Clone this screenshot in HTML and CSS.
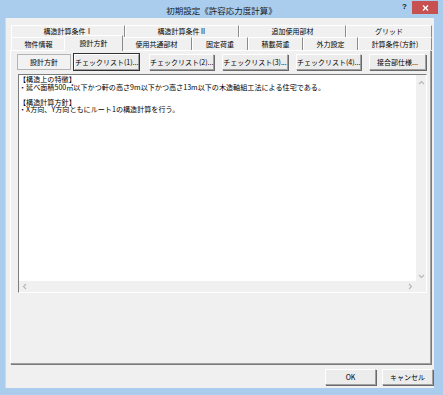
FILE: index.html
```html
<!DOCTYPE html>
<html lang="ja">
<head>
<meta charset="utf-8">
<link rel="stylesheet" href="styles.css">
</head>
<body>
<div class="window">
  <div class="titlebar">
    <div></div>
    <div class="title">初期設定《許容応力度計算》</div>
    <div class="controls">
      <span class="help">?</span>
      <span class="close"><svg width="7" height="6" viewBox="0 0 7 6"><path d="M1 0.5 L6 5.5 M6 0.5 L1 5.5" stroke="#fff" stroke-width="1.4"/></svg></span>
    </div>
  </div>
  <div class="client">
    <div class="tabrow row1">
      <div class="tab">構造計算条件Ⅰ</div>
      <div class="tab">構造計算条件Ⅱ</div>
      <div class="tab">追加使用部材</div>
      <div class="tab">グリッド</div>
    </div>
    <div class="tabrow row2">
      <div class="tab">物件情報</div>
      <div class="tab sel">設計方針</div>
      <div class="tab">使用共通部材</div>
      <div class="tab">固定荷重</div>
      <div class="tab">積載荷重</div>
      <div class="tab">外力設定</div>
      <div class="tab">計算条件(方針)</div>
    </div>
    <div class="panel">
      <div class="btnrow">
        <div class="btn pressed w54 gap3">設計方針</div>
        <div class="btn focus w65 gap10">チェックリスト(1)...</div>
        <div class="btn w65">チェックリスト(2)...</div>
        <div class="btn w66">チェックリスト(3)...</div>
        <div class="btn w65">チェックリスト(4)...</div>
        <div class="btn w57">接合部仕様...</div>
      </div>
      <div class="memo">
        <div class="memo-text">【構造上の特徴】
・延べ面積500㎡以下かつ軒の高さ9m以下かつ高さ13m以下の木造軸組工法による住宅である。

【構造計算方針】
・X方向、Y方向ともにルート1の構造計算を行う。</div>
        <div class="vscroll">
          <svg width="7" height="5" viewBox="0 0 7 5"><path d="M1 4 L3.5 1.5 L6 4" fill="none" stroke="#b8b8b8" stroke-width="1.2"/></svg>
          <svg width="7" height="5" viewBox="0 0 7 5"><path d="M1 1 L3.5 3.5 L6 1" fill="none" stroke="#b8b8b8" stroke-width="1.2"/></svg>
        </div>
        <div class="hscroll">
          <svg width="5" height="7" viewBox="0 0 5 7"><path d="M4 1 L1.5 3.5 L4 6" fill="none" stroke="#b8b8b8" stroke-width="1.2"/></svg>
          <svg width="5" height="7" viewBox="0 0 5 7"><path d="M1 1 L3.5 3.5 L1 6" fill="none" stroke="#b8b8b8" stroke-width="1.2"/></svg>
        </div>
        <div class="corner"></div>
      </div>
    </div>
    <div class="footer">
      <div class="btn w51">OK</div>
      <div class="btn w51">キャンセル</div>
    </div>
  </div>
</div>
</body>
</html>
```
FILE: styles.css
```css
* { box-sizing: border-box; }
html, body { margin: 0; padding: 0; }
body {
  width: 443px;
  height: 395px;
  overflow: hidden;
  background: #aacdee;
  font-family: "Noto Sans CJK JP", "Noto Sans", sans-serif;
  color: #000;
}
.window {
  height: 395px;
  display: flex;
  flex-direction: column;
}
.titlebar {
  height: 18px;
  flex: none;
  display: grid;
  grid-template-columns: 1fr auto 1fr;
  align-items: start;
}
.title {
  font-size: 8.5px;
  line-height: 9px;
  margin-top: 6px;
  white-space: nowrap;
  color: #1a1a1a;
}
.controls {
  justify-self: end;
  display: flex;
  align-items: flex-start;
  margin-right: 5px;
}
.help {
  font-family: "Liberation Sans", sans-serif;
  font-weight: bold;
  font-size: 8px;
  line-height: 8px;
  margin-top: 3px;
  margin-right: 5px;
  color: #222;
}
.close {
  width: 26px;
  height: 13px;
  margin-top: 1px;
  background: #c75050;
  display: flex;
  align-items: center;
  justify-content: center;
}
.client {
  flex: 1;
  margin: 0 9px 7px 5px;
  background: #f0f0f0;
  padding: 7px 2px 0 4px;
  display: flex;
  flex-direction: column;
  border-left: 1px solid #c9dcef;
}
.tabrow {
  display: grid;
  margin-left: 1px;
  margin-right: 0;
}
.row1 {
  height: 12px;
  grid-template-columns: 114px 114px 107px 1fr;
}
.row2 {
  height: 13px;
  grid-template-columns: 55px 55px 71px 56px 55px 55px 1fr;
}
.tab {
  font-size: 7px;
  line-height: 11px;
  text-align: center;
  white-space: nowrap;
  border-top: 1px solid #fff;
  border-left: 1px solid #fff;
  border-right: 1px solid #8c8c8c;
}
.row2 .tab {
  line-height: 12px;
}
.tab.sel {
  position: relative;
  z-index: 1;
  margin: -2px -2px -1px;
  padding-top: 1px;
  background: #f0f0f0;
}
.panel {
  flex: 1;
  margin-right: 1px;
  border-top: 1px solid #fff;
  border-left: 1px solid #fff;
  border-right: 1px solid #a0a0a0;
  border-bottom: 1px solid #a0a0a0;
  box-shadow: 1px 1px 0 #7a7a7a;
  padding: 3px 0 0 6px;
  display: flex;
  flex-direction: column;
}
.btnrow {
  display: flex;
  height: 16px;
  gap: 8px;
}
.btn {
  height: 16px;
  font-size: 7px;
  line-height: 14px;
  text-align: center;
  white-space: nowrap;
  background: #ececec;
  border-top: 1px solid #fff;
  border-left: 1px solid #fff;
  border-right: 1px solid #a0a0a0;
  border-bottom: 1px solid #a0a0a0;
  box-shadow: 1px 1px 0 #6a6a6a;
}
.btn.focus {
  outline: 1px solid #333;
}
.btn.pressed {
  background: #f2f2f2;
  border: 1px solid #b4b4b4;
  box-shadow: none;
}
.w51 { width: 51px; }
.w54 { width: 54px; }
.w57 { width: 57px; }
.w65 { width: 65px; }
.w66 { width: 66px; }
.gap3 { margin-right: -5px; }
.gap10 { margin-right: 2px; }
.memo {
  margin: 4px 0 0 1px;
  width: 409px;
  height: 219px;
  background: #fff;
  border-top: 1px solid #7c7c7c;
  border-left: 1px solid #7c7c7c;
  border-right: 1px solid #fff;
  border-bottom: 1px solid #fff;
  display: grid;
  grid-template-columns: 1fr 10px;
  grid-template-rows: 1fr 11px;
}
.memo-text {
  font-size: 7.1px;
  line-height: 7.5px;
  white-space: pre;
  overflow: visible;
  padding: 1px 0 0 0;
}
.vscroll {
  background: #f0f0f0;
  display: flex;
  flex-direction: column;
  justify-content: space-between;
  align-items: center;
  padding: 5px 0 2px;
}
.hscroll {
  background: #f0f0f0;
  display: flex;
  justify-content: space-between;
  align-items: center;
  padding: 0 3px 0 3px;
}
.corner {
  background: #f0f0f0;
}
.footer {
  height: 24px;
  flex: none;
  display: flex;
  justify-content: flex-end;
  align-items: flex-start;
  gap: 6px;
  padding-top: 5px;
  margin-right: -1px;
}
```
